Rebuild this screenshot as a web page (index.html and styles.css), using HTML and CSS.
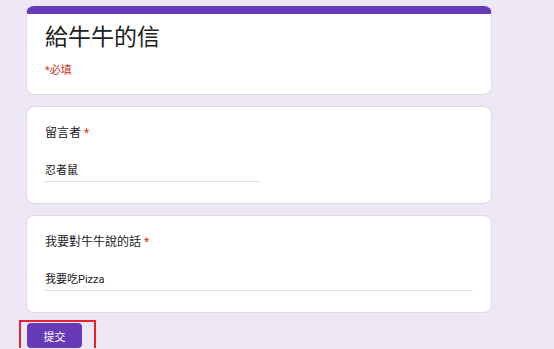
FILE: index.html
```html
<!DOCTYPE html>
<html lang="zh-TW">
  <head>
    <meta charset="UTF-8" />
    <meta name="viewport" content="width=device-width, initial-scale=1.0" />
    <title>給牛牛的信</title>
    <link rel="stylesheet" href="styles.css">
  </head>
  <body>
    <div class="form">
      <div class="card card-head">
        <h1>給牛牛的信</h1>
        <div class="required-note">*必填</div>
      </div>
      <div class="card">
        <div class="question">留言者 <span class="star">*</span></div>
        <div class="answer short">忍者鼠</div>
      </div>
      <div class="card">
        <div class="question">我要對牛牛說的話 <span class="star">*</span></div>
        <div class="answer">我要吃Pizza</div>
      </div>
      <div class="actions">
        <button class="submit">提交</button>
        <span class="mark"></span>
      </div>
    </div>
  </body>
</html>
```
FILE: styles.css
```css
body {
  font-family: Roboto, "Noto Sans CJK TC", sans-serif;
  background-color: #ede7f6;
  color: #202124;
  margin: 0;
  padding: 0;
}
.form {
  width: 466px;
  margin-left: 26px;
  padding-top: 6px;
  display: flex;
  flex-direction: column;
  gap: 11px;
}
.card {
  background-color: #fff;
  border: 1px solid #dadce0;
  border-radius: 8px;
  padding: 18px 18px 21px;
}
.card-head {
  border-top: 8px solid #673ab7;
  padding: 10px 18px 15px;
}
h1 {
  margin: 0;
  font-size: 23px;
  line-height: 28px;
  font-weight: 400;
  color: #202124;
}
.required-note {
  margin-top: 11px;
  font-size: 11px;
  line-height: 16px;
  color: #d93025;
}
.question {
  font-size: 12px;
  line-height: 16px;
}
.star {
  color: #d93025;
}
.answer {
  margin-top: 22px;
  font-size: 11px;
  line-height: 16px;
  padding-bottom: 2px;
  border-bottom: 1px solid #e0e0e0;
}
.answer.short {
  width: 215px;
}
.actions {
  position: relative;
  margin-top: -1px;
  margin-left: 1px;
}
.submit {
  font-family: Roboto, "Noto Sans CJK TC", sans-serif;
  width: 55px;
  height: 25px;
  border: none;
  border-radius: 4px;
  background-color: #673ab7;
  color: #fff;
  font-size: 11px;
  padding: 0;
}
.mark {
  position: absolute;
  left: -8px;
  top: -3px;
  width: 73px;
  height: 28px;
  border: 2px solid #e8222a;
}
```
